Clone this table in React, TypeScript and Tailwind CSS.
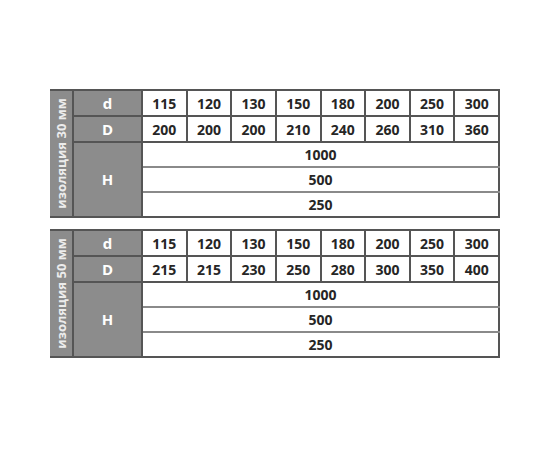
const tables = [
  {
    label: 'изоляция 30 мм',
    d: ['115', '120', '130', '150', '180', '200', '250', '300'],
    D: ['200', '200', '200', '210', '240', '260', '310', '360'],
  },
  {
    label: 'изоляция 50 мм',
    d: ['115', '120', '130', '150', '180', '200', '250', '300'],
    D: ['215', '215', '230', '250', '280', '300', '350', '400'],
  },
]

const H = ['1000', '500', '250']

function SizeTable({ label, d, D }: { label: string; d: string[]; D: string[] }) {
  return (
    <table className="w-[450px] table-fixed border-collapse text-[14px] font-bold text-[#262626]">
      <colgroup>
        <col className="w-[23px]" />
        <col className="w-[69px]" />
        {d.map((_, i) => (
          <col key={i} />
        ))}
      </colgroup>
      <tbody>
        <tr className="h-[26px]">
          <td rowSpan={5} className="border-y-2 border-r-2 border-[#555] bg-[#8c8c8c] p-0">
            <div className="flex h-[124px] w-[23px] items-center justify-center">
              <span className="-rotate-90 whitespace-nowrap text-[13px] font-bold leading-none text-[#ececec]">
                {label}
              </span>
            </div>
          </td>
          <td className="border-2 border-[#555] bg-[#8c8c8c] text-center text-[15px] text-white">d</td>
          {d.map((v, i) => (
            <td key={i} className="border-2 border-[#555] bg-white text-center">
              {v}
            </td>
          ))}
        </tr>
        <tr className="h-[26px]">
          <td className="border-2 border-[#555] bg-[#8c8c8c] text-center text-[15px] text-white">D</td>
          {D.map((v, i) => (
            <td key={i} className="border-2 border-[#555] bg-white text-center">
              {v}
            </td>
          ))}
        </tr>
        {H.map((v, i) => (
          <tr key={v} className="h-[25px]">
            {i === 0 && (
              <td rowSpan={3} className="border-2 border-[#555] bg-[#8c8c8c] text-center text-[15px] text-white">
                H
              </td>
            )}
            <td
              colSpan={8}
              className={`border-x-2 border-[#555] bg-white text-center ${
                i === 2 ? 'border-b-2 border-b-[#555]' : 'border-b-2 border-b-[#8a8a8a]'
              } ${i === 0 ? 'border-t-2 border-t-[#555]' : ''}`}
            >
              {v}
            </td>
          </tr>
        ))}
      </tbody>
    </table>
  )
}

export default function App() {
  return (
    <div className="h-[450px] w-[550px] bg-white pl-[50px] pt-[89px]" style={{ fontFamily: '"Open Sans", sans-serif' }}>
      <div className="flex flex-col gap-[11px]">
        {tables.map((t) => (
          <SizeTable key={t.label} {...t} />
        ))}
      </div>
    </div>
  )
}
